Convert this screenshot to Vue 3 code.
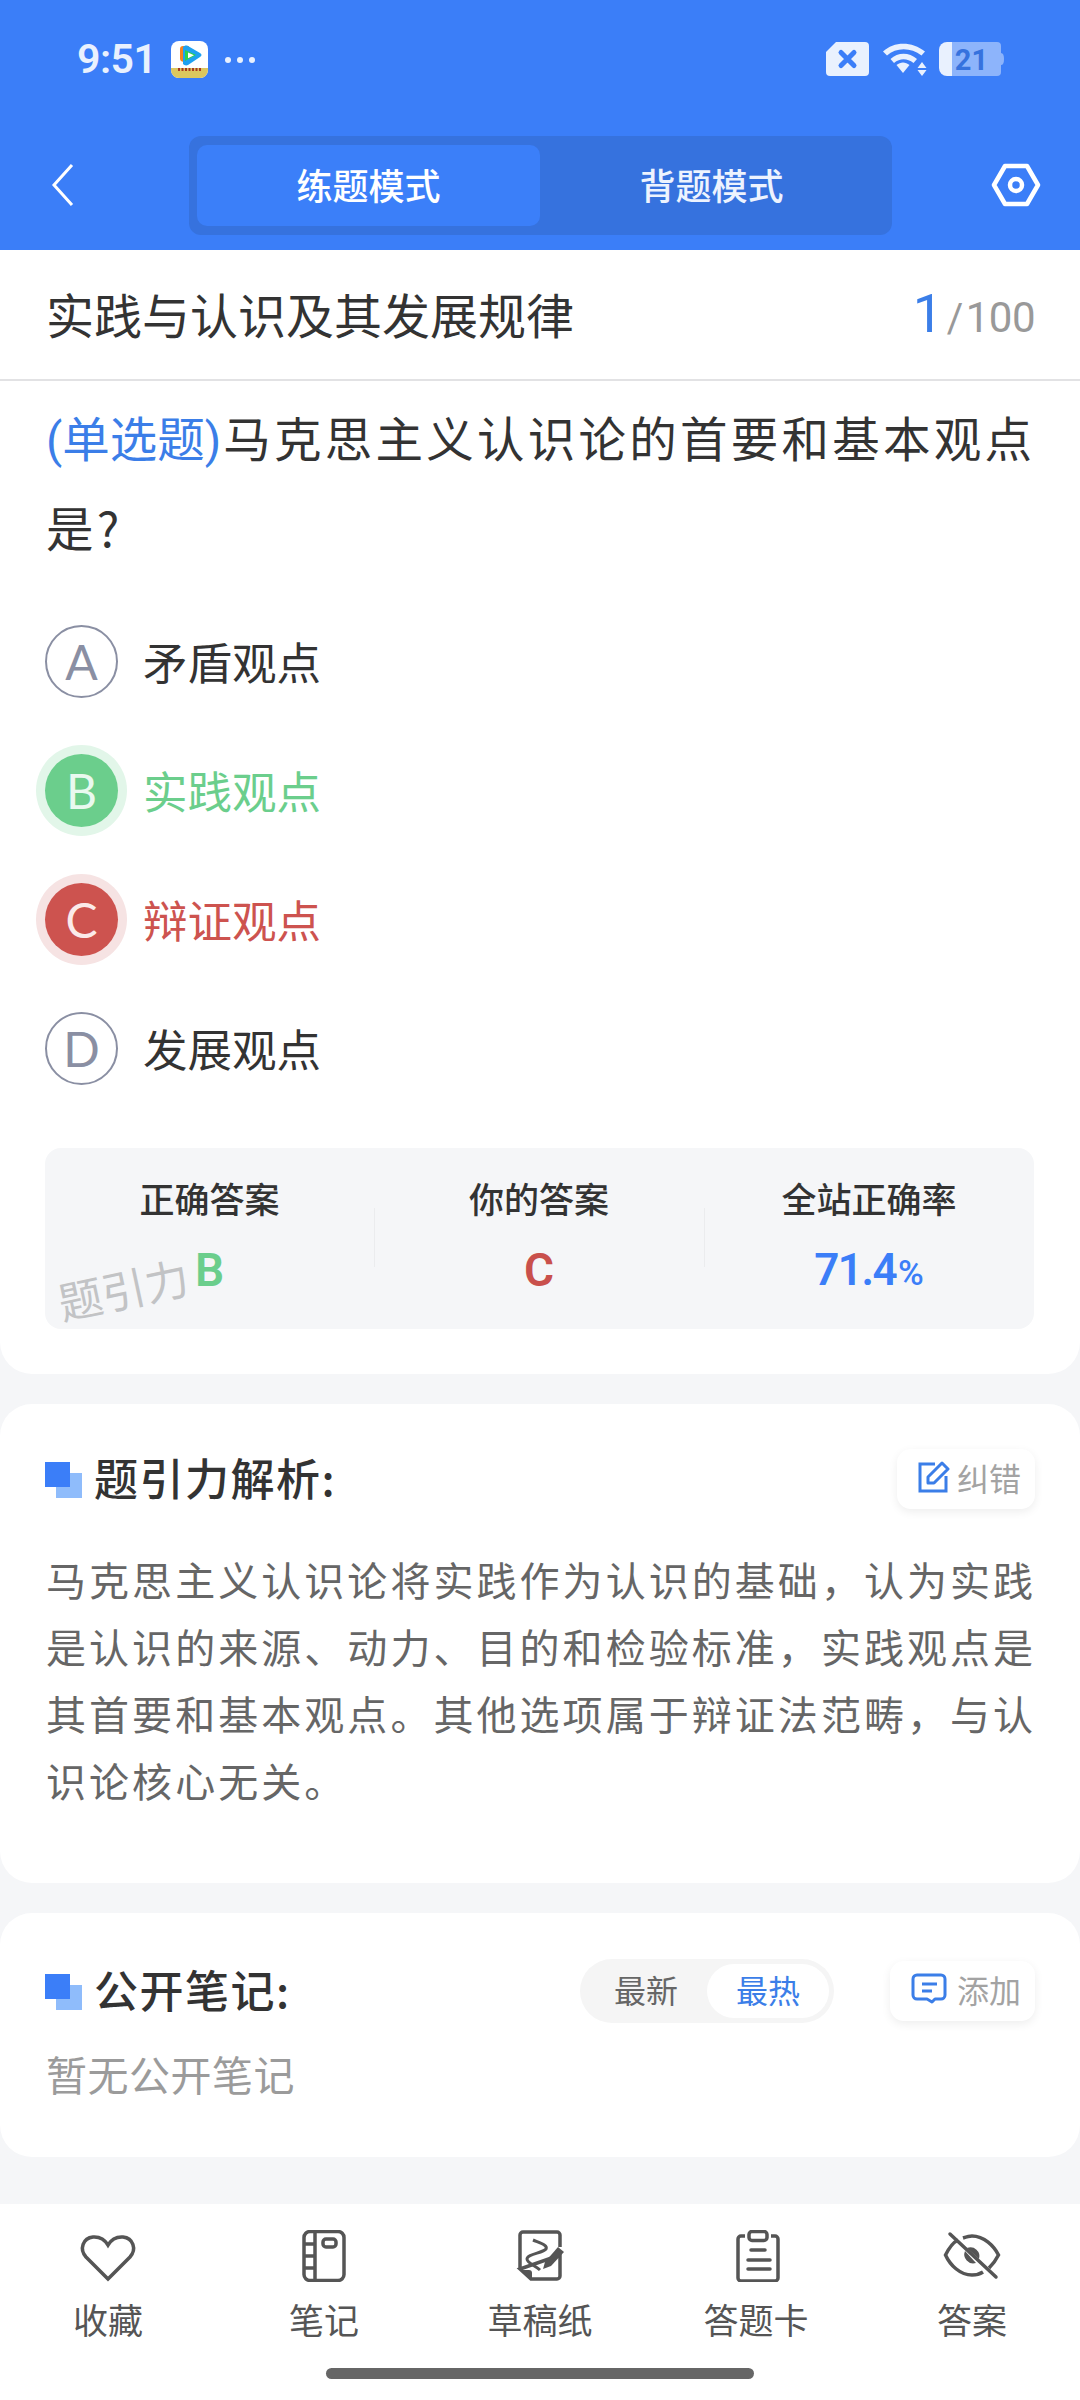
<script setup>
const options = [
  { key: 'A', text: '矛盾观点', state: '' },
  { key: 'B', text: '实践观点', state: 'right' },
  { key: 'C', text: '辩证观点', state: 'wrong' },
  { key: 'D', text: '发展观点', state: '' },
]
</script>

<template>
  <div class="page">
    <header class="top">
      <div class="status">
        <div class="status-left">
          <span class="time">9:51</span>
          <svg class="app" viewBox="0 0 37 37">
            <rect width="37" height="37" rx="8" fill="#fff"/>
            <path d="M0 27h37v2a8 8 0 0 1-8 8H8a8 8 0 0 1-8-8z" fill="#dcc75e"/>
            <path d="M9 8c0-2 1-3 3-3h6L14 21c-3 0-5-1-5-3z" fill="#f58220"/>
            <path d="M12 6c1-1 3-2 5-1l12 7c2 1 2 3 0 4l-12 8c-2 1-4 0-5-1z" fill="#1fa1f1"/>
            <path d="M14 9l11 5-11 6z" fill="#2fd14a"/>
            <path d="M17 11.500l6 2.800-6 2.900z" fill="#fff"/>
            <path d="M7 28.500h23" fill="none" stroke="#a83a22" stroke-width="3" stroke-dasharray="2 1.500"/>
          </svg>
          <span class="dots"><i></i><i></i><i></i></span>
        </div>
        <div class="status-right">
          <svg class="sim" viewBox="0 0 43 34">
            <path d="M10 0h29a4 4 0 0 1 4 4v26a4 4 0 0 1-4 4H4a4 4 0 0 1-4-4V10z" fill="#e9f1fe"/>
            <path d="M15 10.500l13 13M28 10.500l-13 13" stroke="#3b7ef8" stroke-width="5" stroke-linecap="round"/>
          </svg>
          <svg class="wifi" viewBox="0 0 46 34">
            <path d="M2 9.500C13-1 31-1 44 9.500l-3.500 4C30 5 15 5 6 13.500z" fill="#e9f1fe"/>
            <path d="M9.500 17C17 10 28 10 36 17l-3.500 4C26 16 19 16 13 21z" fill="#e9f1fe"/>
            <path d="M15.500 23c4-3.500 9-3.500 13 0L22 31z" fill="#e9f1fe"/>
            <path d="M41 20l4.500 6h-9zM36.500 28h9L41 34z" fill="#e9f1fe"/>
          </svg>
          <svg class="batt" viewBox="0 0 65 34">
            <path d="M13 0h45a4 4 0 0 1 4 4v26a4 4 0 0 1-4 4H13z" fill="#8db4fb"/>
            <path d="M62 11c2 0 3 2 3 6s-1 6-3 6z" fill="#8db4fb"/>
            <path d="M13 0H8a8 8 0 0 0-8 8v18a8 8 0 0 0 8 8h5z" fill="#e9f1fe"/>
            <text x="32.500" y="28" text-anchor="middle" class="batt-num">21</text>
          </svg>
        </div>
      </div>
      <nav class="nav">
        <svg class="back" viewBox="0 0 24 44">
          <path d="M21 2 3 22l18 20" fill="none" stroke="#fff" stroke-width="3"/>
        </svg>
        <div class="mode">
          <span class="mode-tab on">练题模式</span>
          <span class="mode-tab">背题模式</span>
        </div>
        <svg class="gear" viewBox="0 0 50 44">
          <path d="M14 3h22l11 19-11 19H14L3 22z" fill="none" stroke="#fff" stroke-width="4.500" stroke-linejoin="round"/>
          <circle cx="25" cy="22" r="6" fill="none" stroke="#fff" stroke-width="4.500"/>
        </svg>
      </nav>
    </header>

    <section class="card first">
      <div class="chapter">
        <span class="chapter-name">实践与认识及其发展规律</span>
        <span class="count"><b>1</b><em>/</em>100</span>
      </div>
      <div class="question"><span class="qtype">(单选题)</span>马克思主义认识论的首要和基本观点是?</div>
      <ul class="options">
        <li v-for="o in options" :key="o.key" class="option" :class="o.state">
          <span class="badge">{{ o.key }}</span>
          <span class="opt-text">{{ o.text }}</span>
        </li>
      </ul>
      <div class="stats">
        <div class="stat">
          <div class="stat-label">正确答案</div>
          <div class="stat-val green">B</div>
        </div>
        <div class="stat">
          <div class="stat-label">你的答案</div>
          <div class="stat-val red">C</div>
        </div>
        <div class="stat">
          <div class="stat-label">全站正确率</div>
          <div class="stat-val blue">71.4<small>%</small></div>
        </div>
        <span class="mark">题引力</span>
      </div>
    </section>

    <section class="card analysis">
      <div class="sec-head">
        <span class="squares"><i></i><i></i></span>
        <span class="sec-title">题引力解析:</span>
        <span class="chip fix">
          <svg class="chip-ico" viewBox="0 0 33 32">
            <path d="M17 3H2v27h26V15" fill="none" stroke="#3b7ee8" stroke-width="3"/>
            <path d="M10 22v-6L24 2l6 6-14 14z" fill="none" stroke="#3b7ee8" stroke-width="3" stroke-linejoin="round"/>
          </svg>
          纠错
        </span>
      </div>
      <p class="explain">马克思主义认识论将实践作为认识的基础，认为实践是认识的来源、动力、目的和检验标准，实践观点是其首要和基本观点。其他选项属于辩证法范畴，与认识论核心无关。</p>
    </section>

    <section class="card notes">
      <div class="sec-head">
        <span class="squares"><i></i><i></i></span>
        <span class="sec-title">公开笔记:</span>
        <div class="sort">
          <span class="sort-item">最新</span>
          <span class="sort-item on">最热</span>
        </div>
        <span class="chip add">
          <svg class="chip-ico wide" viewBox="0 0 36 32">
            <path d="M6 2h24a4 4 0 0 1 4 4v16a4 4 0 0 1-4 4h-6l-3 3-5-3H6a4 4 0 0 1-4-4V6a4 4 0 0 1 4-4z" fill="none" stroke="#3b7ee8" stroke-width="3" stroke-linejoin="round"/>
            <path d="M11 11h15M11 18h10" stroke="#3b7ee8" stroke-width="3"/>
          </svg>
          添加
        </span>
      </div>
      <p class="empty">暂无公开笔记</p>
    </section>

    <footer class="bar">
      <div class="tools">
        <div class="tool">
          <svg viewBox="0 0 60 52">
            <path d="M30 49 8 27C1 19 5 8 15 7c7-.5 12 3 15 8 3-5 8-8.500 15-8 10 1 14 12 7 20z" class="ln"/>
          </svg>
          <span>收藏</span>
        </div>
        <div class="tool">
          <svg viewBox="0 0 60 52">
            <rect x="10" y="1.500" width="40" height="49" rx="6" class="ln"/>
            <path d="M21 2v48M10 14h11M10 26h11M10 38h11" class="ln"/>
            <rect x="29" y="9" width="13" height="8" rx="3" class="ln"/>
          </svg>
          <span>笔记</span>
        </div>
        <div class="tool">
          <svg viewBox="0 0 60 52">
            <path d="M10 39V5a3 3 0 0 1 3-3h34a3 3 0 0 1 3 3v12M50 25v21a3 3 0 0 1-3 3H21L10 39z" class="ln"/>
            <path d="M11 40h8a3 3 0 0 1 3 3v7z" fill="#555"/>
            <path d="M23 10c7 3 15 5 13 9-3 4-19 5-19 10 0 4 9 7 13 11" class="ln thin"/>
            <path d="M33 39l2-7L48 17l6 5-13 14z" fill="#555"/>
          </svg>
          <span>草稿纸</span>
        </div>
        <div class="tool">
          <svg viewBox="0 0 60 52">
            <path d="M19 6h-4a3 3 0 0 0-3 3v39a3 3 0 0 0 3 3h34a3 3 0 0 0 3-3V9a3 3 0 0 0-3-3h-4" class="ln"/>
            <rect x="23" y="1.500" width="18" height="9" rx="3" class="ln"/>
            <path d="M25 20h14M22 30h22M22 39h22" class="ln round"/>
          </svg>
          <span>答题卡</span>
        </div>
        <div class="tool">
          <svg viewBox="0 0 60 52">
            <path d="M16 10C10 13 6 20 3.500 25 8 35 18 45 30 45c5 0 8-1 11-3M47 38c4-4 7-8 9.500-13C52 16 42 6 30 6c-3 0-6 1-9 2" class="ln"/>
            <path d="M25 18a9 9 0 0 1 12 11zM23 21a9 9 0 0 0 11 12z" fill="#555"/>
            <path d="M8 4l46 43" class="ln round"/>
          </svg>
          <span>答案</span>
        </div>
      </div>
      <div class="home"></div>
    </footer>
  </div>
</template>

<style>
html, body { margin: 0; background: #f5f6f8; }
</style>

<style scoped>
.page {
  width: 1080px;
  height: 2400px;
  display: flex;
  flex-direction: column;
  background: #f5f6f8;
  font-family: "Noto Sans CJK SC", "Noto Sans", sans-serif;
  color: #333;
  overflow: hidden;
}
.top { height: 250px; background: #3b7ef8; box-sizing: border-box; position: relative; }
.status {
  height: 136px;
  box-sizing: border-box;
  padding: 41px 76px 0 77px;
  display: flex;
  justify-content: space-between;
  align-items: flex-start;
}
.status-left { display: flex; align-items: center; height: 37px; }
.time { font: 600 41px/37px Roboto, sans-serif; letter-spacing: -0.5px; color: #e9f1fe; width: 94px; }
.app { width: 37px; height: 37px; margin-right: 17px; }
.dots { display: flex; gap: 6px; }
.dots i { width: 6px; height: 6px; border-radius: 50%; background: #e9f1fe; }
.status-right { display: flex; align-items: center; margin-top: 1px; }
.sim { width: 43px; height: 34px; margin-right: 12px; }
.wifi { width: 46px; height: 34px; margin-right: 12px; }
.batt { width: 65px; height: 34px; }
.batt-num { font: 700 29px Roboto, sans-serif; fill: #3672de; }
.nav { display: flex; align-items: flex-start; height: 114px; position: relative; }
.back { width: 24px; height: 44px; margin: 27px 0 0 51px; flex: none; }
.mode {
  width: 703px;
  height: 99px;
  margin-left: 114px;
  box-sizing: border-box;
  padding: 9px 8px;
  border-radius: 12px;
  background: #3672de;
  display: flex;
  flex: none;
}
.mode-tab {
  flex: none;
  width: 343px;
  height: 81px;
  border-radius: 10px;
  color: #edf3fe;
  font-size: 36px;
  font-weight: 500;
  line-height: 79px;
  text-align: center;
}
.mode-tab.on { background: #3b7ff9; color: #fff; }
.gear { width: 50px; height: 44px; margin: 27px 0 0 99px; flex: none; }

.card { background: #fff; border-radius: 32px; }
.first {
  height: 1124px;
  border-radius: 0 0 32px 32px;
  padding: 0 45px;
  box-sizing: border-box;
}
.chapter {
  height: 131px;
  margin: 0 -45px;
  padding: 0 45px 3px 46px;
  box-sizing: border-box;
  border-bottom: 2px solid #e2e2e4;
  display: flex;
  justify-content: space-between;
  align-items: center;
}
.chapter-name { font-size: 48px; color: #333; line-height: 1; }
.count { font: 400 42px Roboto, sans-serif; letter-spacing: -0.5px; color: #999; display: flex; align-items: baseline; }
.count b { font-weight: 400; font-size: 54px; color: #3b7ee8; }
.count em { font-style: normal; font-size: 40px; margin: 0 3px 0 4px; }
.question {
  font-size: 47.500px;
  line-height: 86px;
  letter-spacing: 3.250px;
  margin: 13px -6px 0 0;
  padding-left: 1px;
  color: #333;
  height: 172px;
}
.qtype { color: #3b7ee8; letter-spacing: 0; margin-right: 2px; font-family: Roboto, "Noto Sans CJK SC", sans-serif; }
.options { list-style: none; margin: 59px 0 0; padding: 0; }
.option { display: flex; align-items: center; height: 73px; margin-bottom: 56px; }
.option:last-child { margin-bottom: 0; }
.badge {
  width: 73px;
  height: 73px;
  box-sizing: border-box;
  border: 2px solid #8a8fa3;
  border-radius: 50%;
  font: 400 48px/70px Lato, Roboto, sans-serif;
  color: #8a8fa3;
  text-align: center;
  margin-right: 25px;
}
.opt-text { font-size: 44.500px; color: #333; line-height: 1; }
.right .badge { background: #6bce8c; border: 0; box-shadow: 0 0 0 9px #e2f6e9; color: #e9f9ef; line-height: 74px; }
.right .opt-text { color: #6bce8c; }
.wrong .badge { background: #cd534f; border: 0; box-shadow: 0 0 0 9px #f6e3e3; color: #fbeaea; line-height: 74px; }
.wrong .opt-text { color: #cd534f; }
.stats {
  position: relative;
  margin-top: 63px;
  width: 989px;
  height: 181px;
  background: #f5f6f8;
  border-radius: 16px;
  display: grid;
  grid-template-columns: 329px 330px 330px;
}
.stat { text-align: center; position: relative; padding-top: 29px; }
.stat + .stat::before {
  content: "";
  position: absolute;
  left: 0;
  top: 60px;
  height: 59px;
  width: 1px;
  background: #ebecee;
}
.stat-label { font-size: 35px; font-weight: 500; line-height: 42px; color: #333; }
.stat-val { font: 600 46px/50px Roboto, sans-serif; margin-top: 26px; }
.stat-val.blue { font-size: 44px; letter-spacing: -1.500px; }
.stat-val small { font-size: 35px; font-weight: 500; letter-spacing: 0; margin-left: 2px; }
.green { color: #6bce8c; }
.red { color: #c9504c; }
.blue { color: #3b7ef8; }
.mark {
  position: absolute;
  left: 12px;
  top: 118px;
  font-size: 44px;
  line-height: 44px;
  color: #c2c3c5;
  font-weight: 400;
  transform: rotate(-12deg);
}

.analysis { margin-top: 30px; height: 479px; padding: 0 45px; box-sizing: border-box; }
.notes { margin-top: 30px; height: 244px; padding: 0 45px; box-sizing: border-box; }
.sec-head { display: flex; align-items: center; position: relative; }
.analysis .sec-head { height: 60px; padding-top: 45px; }
.notes .sec-head { height: 64px; padding-top: 46px; }
.squares { position: relative; width: 37px; height: 36px; margin-right: 12px; flex: none; margin-top: 1px; }
.squares i { position: absolute; display: block; }
.squares i:first-child { right: 0; bottom: 0; width: 26px; height: 25px; background: #8fbcfb; }
.squares i:last-child { left: 0; top: 0; width: 25px; height: 25px; background: #3b7ef8; }
.sec-title { font-size: 44px; font-weight: 500; color: #333; letter-spacing: 1.500px; margin-bottom: 4px; }
.chip {
  margin-left: auto;
  height: 60px;
  box-sizing: border-box;
  background: #fff;
  border-radius: 14px;
  box-shadow: 0 3px 10px rgba(0, 0, 0, 0.07);
  display: flex;
  align-items: center;
  justify-content: flex-end;
  padding: 0 14px 5px 0;
  font-size: 32px;
  color: #a3a3a3;
}
.fix { width: 138px; }
.add { width: 145px; margin-left: 56px; }
.chip-ico { width: 33px; height: 32px; margin-right: 6px; flex: none; }
.chip-ico.wide { width: 36px; margin-right: 10px; }
.explain {
  margin: 37px -6px 0 0;
  font-size: 40px;
  line-height: 67px;
  letter-spacing: 3.050px;
  color: #666;
  padding-left: 1px;
}
.sort {
  margin-left: auto;
  width: 254px;
  height: 64px;
  box-sizing: border-box;
  border-radius: 32px;
  background: #f5f5f5;
  padding: 5px;
  display: flex;
  justify-content: flex-end;
  align-items: center;
  font-size: 32px;
  color: #666;
}
.sort-item { flex: 1; text-align: center; line-height: 50px; padding-bottom: 4px; }
.sort-item.on { flex: none; width: 122px; background: #fff; border-radius: 27px; color: #3b7ee8; }
.notes .add { margin-left: 56px; }
.empty { margin: 25px 0 0 1px; font-size: 41px; line-height: 50px; letter-spacing: 0.500px; color: #9b9b9b; }

.bar { margin-top: auto; height: 196px; background: #fff; position: relative; }
.tools { display: grid; grid-template-columns: repeat(5, 216px); padding-top: 26px; }
.tool { display: flex; flex-direction: column; align-items: center; color: #555; font-size: 35px; line-height: 42px; }
.tool svg { width: 60px; height: 52px; margin-bottom: 16px; }
.ln { fill: none; stroke: #555; stroke-width: 3.500; }
.thin { stroke-width: 3; }
.round { stroke-linecap: round; }
.home {
  position: absolute;
  left: 326px;
  top: 164px;
  width: 428px;
  height: 11px;
  border-radius: 6px;
  background: #666;
}
</style>
